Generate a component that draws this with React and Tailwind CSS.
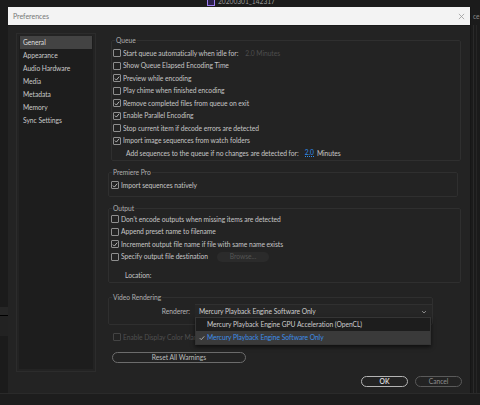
import React from "react";

const Check = ({ checked, disabled }) => (
  <span
    className={`w-[8px] h-[8px] shrink-0 border rounded-[1px] flex items-center justify-center ${
      disabled ? "border-[#444444]" : "border-[#8e8e8e]"
    }`}
  >
    {checked && (
      <svg viewBox="0 0 8 8" className="w-[7px] h-[7px]">
        <path d="M1.2 4.1 L3.2 6.1 L6.9 1.5" fill="none" stroke="#d2d2d2" strokeWidth="1.1" />
      </svg>
    )}
  </span>
);

const Row = ({ checked, disabled, children }) => (
  <div className="h-[12.5px] flex items-center gap-[2px]">
    <Check checked={checked} disabled={disabled} />
    <span className={disabled ? "text-[#505050]" : "text-[#c6c6c6]"}>{children}</span>
  </div>
);

const Legend = ({ children }) => (
  <legend className="ml-[3px] px-[1px] leading-[9px] text-[#aeaeae]">{children}</legend>
);

const sidebar = ["General", "Appearance", "Audio Hardware", "Media", "Metadata", "Memory", "Sync Settings"];

export default function App() {
  return (
    <div className="w-[480px] h-[405px] bg-[#1b1b1b] overflow-hidden flex flex-col font-['Lato',sans-serif] text-[6.7px] tracking-[-0.03px] leading-[9px]">
      {/* app behind the dialog */}
      <div className="h-[7px] shrink-0 overflow-hidden flex items-start pl-[207px] gap-[3px]">
        <span className="w-[8px] h-[8px] -mt-[2px] bg-[#2a1f4a] border border-[#9b7cf0] shrink-0" />
        <span className="-mt-[3px] text-[#9a9a9a]">20200301_142317</span>
      </div>

      <div className="flex h-[386px] shrink-0">
        <div className="w-[8px] shrink-0 flex flex-col">
          <div className="h-[300px]" />
          <div className="h-[8px] bg-[#262626]" />
          <div className="h-[1px] bg-[#000000]" />
          <div className="h-[20px] bg-[#222222]" />
        </div>

        {/* dialog */}
        <div className="w-[463px] shrink-0 flex flex-col bg-[#232323] border-r border-[#161616]">
          <div className="h-[18px] shrink-0 bg-[#f3f3f3] flex items-center justify-between pl-[5px] pr-[5px]">
            <span className="text-[#777777] text-[7px]">Preferences</span>
            <svg viewBox="0 0 8 8" className="w-[7px] h-[7px]">
              <path d="M1 1 L7 7 M7 1 L1 7" stroke="#9a9a9a" strokeWidth="0.9" />
            </svg>
          </div>

          <div className="flex-1 flex border-t border-[#1a1a1a]">
            {/* sidebar */}
            <div className="mt-[7px] ml-[8px] w-[80px] h-[339px] shrink-0 border border-[#2c2c2c] p-[2px]">
              <div className="h-full bg-[#1d1d1d] flex flex-col">
                {sidebar.map((s, i) => (
                  <div
                    key={s}
                    className={`h-[13px] flex items-center pl-[3px] mx-[1px] ${
                      i === 0 ? "bg-[#434343] text-[#dedede]" : "text-[#c9c9c9]"
                    }`}
                  >
                    {s}
                  </div>
                ))}
              </div>
            </div>

            {/* content */}
            <div className="ml-[12px] w-[354px] flex flex-col">
              <fieldset className="mt-[10px] ml-[3px] w-[350px] border border-[#2f2f2f] rounded-[2px]">
                <Legend>Queue</Legend>
                <div className="pl-[1px] pt-[1.75px] pb-[1px]">
                  <div className="h-[12.5px] flex items-center gap-[2px]">
                    <Check />
                    <span className="text-[#c6c6c6]">Start queue automatically when idle for:</span>
                    <span className="ml-[5px] text-[#4e4e4e]">2.0 Minutes</span>
                  </div>
                  <Row>Show Queue Elapsed Encoding Time</Row>
                  <Row checked>Preview while encoding</Row>
                  <Row>Play chime when finished encoding</Row>
                  <Row checked>Remove completed files from queue on exit</Row>
                  <Row checked>Enable Parallel Encoding</Row>
                  <Row>Stop current item if decode errors are detected</Row>
                  <Row checked>Import image sequences from watch folders</Row>
                  <div className="h-[12.5px] flex items-center pl-[13px]">
                    <span className="text-[#c6c6c6]">Add sequences to the queue if no changes are detected for:</span>
                    <span className="ml-[6px] text-[#2f8cec] border-b border-dotted border-[#2f8cec] leading-[7px]">2.0</span>
                    <span className="ml-[3px] text-[#c6c6c6]">Minutes</span>
                  </div>
                </div>
              </fieldset>

              <fieldset className="mt-[7px] w-[350px] border border-[#2f2f2f] rounded-[2px]">
                <Legend>Premiere Pro</Legend>
                <div className="pl-[2px] pt-[1.5px] pb-[5px]">
                  <Row checked>Import sequences natively</Row>
                </div>
              </fieldset>

              <fieldset className="mt-[6.5px] w-[353px] border border-[#2f2f2f] rounded-[2px]">
                <Legend>Output</Legend>
                <div className="pl-[2px] pb-[1px]">
                  <Row>Don't encode outputs when missing items are detected</Row>
                  <Row>Append preset name to filename</Row>
                  <Row checked>Increment output file name if file with same name exists</Row>
                  <div className="h-[12.5px] flex items-center gap-[2px]">
                    <Check />
                    <span className="text-[#c6c6c6]">Specify output file destination</span>
                    <span className="ml-[7px] w-[52px] h-[10px] rounded-full bg-[#2b2b2b] flex items-center justify-center text-[#555555]">
                      Browse...
                    </span>
                  </div>
                  <div className="mt-[6px] h-[12.5px] flex items-center pl-[14px] text-[#c6c6c6]">Location:</div>
                </div>
              </fieldset>

              <fieldset className="mt-[9.5px] w-[325px] border border-[#2f2f2f] rounded-[2px] relative z-10">
                <Legend>Video Rendering</Legend>
                <div className="pt-[2.25px] pb-[6px] flex items-center">
                  <span className="w-[81px] text-right text-[#b4b4b4]">Renderer:</span>
                  <div className="ml-[5px] flex-1 h-[14px] relative">
                    <div className="h-full bg-[#262626] border-t border-[#303030] flex items-center justify-between pl-[4px] pr-[5px] text-[#cfcfcf]">
                      <span>Mercury Playback Engine Software Only</span>
                      <svg viewBox="0 0 8 8" className="w-[6px] h-[6px]">
                        <path d="M1.5 2.8 L4 5.3 L6.5 2.8" fill="none" stroke="#b0b0b0" strokeWidth="1" />
                      </svg>
                    </div>
                    <div className="absolute left-0 top-[13px] w-[236px] bg-[#1d1d1d] border border-[#353535] shadow-[0_2px_4px_rgba(0,0,0,0.6)] flex flex-col">
                      <div className="h-[13px] flex items-center pl-[11px] text-[#cdcdcd]">
                        Mercury Playback Engine GPU Acceleration (OpenCL)
                      </div>
                      <div className="h-[13px] flex items-center bg-[#3a3a3a] text-[#3d8ee8]">
                        <svg viewBox="0 0 8 8" className="ml-[3px] w-[6px] h-[6px]">
                          <path d="M1 4.2 L3 6.2 L7 1.8" fill="none" stroke="#c4c4c4" strokeWidth="1.1" />
                        </svg>
                        <span className="ml-[2px]">Mercury Playback Engine Software Only</span>
                      </div>
                    </div>
                  </div>
                </div>
              </fieldset>

              <div className="mt-[5.75px] pl-[5px]">
                <Row disabled>Enable Display Color Management</Row>
              </div>

              <div className="mt-[8.25px] ml-[4px] w-[134px] h-[11px] rounded-full border border-[#6c6c6c] flex items-center justify-center text-[#bdbdbd]">
                Reset All Warnings
              </div>

              <div className="mt-[13.5px] flex justify-end gap-[7px]">
                <div className="w-[47px] h-[11px] rounded-full border border-[#b4b4b4] flex items-center justify-center text-[#e2e2e2] font-semibold">
                  OK
                </div>
                <div className="w-[47px] h-[11px] rounded-full border border-[#5a5a5a] flex items-center justify-center text-[#8e8e8e]">
                  Cancel
                </div>
              </div>
            </div>
          </div>
        </div>

        <div className="w-[9px] shrink-0 flex flex-col">
          <div className="h-[18px] pl-[2px] flex items-center text-[#8a8a8a] overflow-hidden">ce</div>
          <div className="flex-1 flex">
            <div className="w-[3px] border-r border-[#2a2a2a]" />
            <div className="w-[3px] border-r border-[#262626]" />
          </div>
        </div>
      </div>

      <div className="flex-1 bg-[#1d1d1d] border-t border-[#2a2a2a]" />
    </div>
  );
}
